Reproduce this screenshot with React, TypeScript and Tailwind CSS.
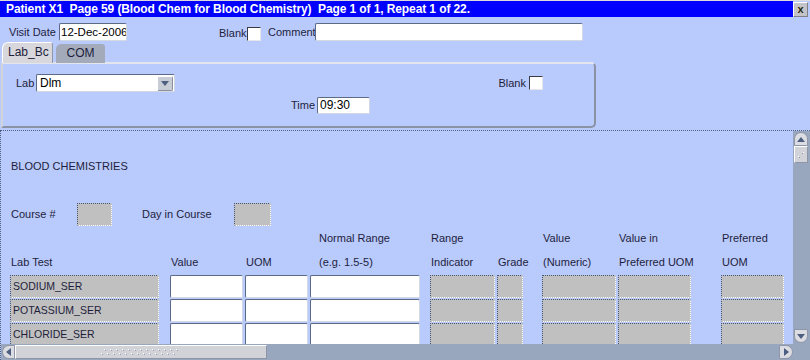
import React from 'react';

const LABEL = 'text-[11px] text-[#1e1e3c] whitespace-nowrap';
const WHITE_BOX =
  'bg-white border border-t-[#5d6a86] border-l-[#5d6a86] border-r-[#d4d8e2] border-b-[#d4d8e2] rounded-[2px]';
const GRAY_BOX =
  'bg-[#c0c0c0] border border-dotted border-t-[#45547a] border-l-[#45547a] border-r-white border-b-white';

// column placement in the lab grid (margin from previous column + width)
const COLS = [
  'ml-[9px] w-[149px]',
  'ml-[11px] w-[73px]',
  'ml-[2px] w-[63px]',
  'ml-[2px] w-[110px]',
  'ml-[10px] w-[65px]',
  'ml-[2px] w-[26px]',
  'ml-[19px] w-[74px]',
  'ml-[2px] w-[73px]',
  'ml-[30px] w-[63px]',
];

// true = editable (white), false = read-only (gray)
const EDITABLE = [false, true, true, true, false, false, false, false, false];

const HEAD_1 = ['', '', '', 'Normal Range', 'Range', '', 'Value', 'Value in', 'Preferred'];
const HEAD_2 = ['Lab Test', 'Value', 'UOM', '(e.g. 1.5-5)', 'Indicator', 'Grade', '(Numeric)', 'Preferred UOM', 'UOM'];

const TESTS = ['SODIUM_SER', 'POTASSIUM_SER', 'CHLORIDE_SER'];

function Checkbox() {
  return (
    <div className="w-[14px] h-[14px] bg-white border border-t-[#3a3a44] border-l-[#3a3a44] border-r-[#e6e6ea] border-b-[#e6e6ea]" />
  );
}

function Triangle({ dir }: { dir: 'up' | 'down' | 'left' | 'right' }) {
  const pts = {
    up: '0,5 4,0 8,5',
    down: '0,0 8,0 4,5',
    left: '5,0 5,8 0,4',
    right: '0,0 0,8 5,4',
  }[dir];
  const w = dir === 'up' || dir === 'down' ? 8 : 5;
  const h = dir === 'up' || dir === 'down' ? 5 : 8;
  return (
    <svg width={w} height={h} viewBox={`0 0 ${w} ${h}`}>
      <polygon points={pts} fill="#4e5e80" />
    </svg>
  );
}

function HeaderRow({ labels }: { labels: string[] }) {
  return (
    <div className="flex h-[24px] items-center">
      {COLS.map((c, i) => (
        <div key={i} className={`${c} ${LABEL} ${i === 3 ? 'pl-[9px]' : 'pl-[1px]'}`}>
          {labels[i]}
        </div>
      ))}
    </div>
  );
}

export default function App() {
  return (
    <div className="w-[810px] h-[360px] overflow-hidden bg-[#b9cafd] border-t border-t-[#dcdcdc] flex flex-col font-['Liberation_Sans',Arial,sans-serif]">
      {/* Title bar */}
      <div className="flex h-[16px] shrink-0">
        <div className="flex-1 bg-[#0000ff] text-white font-bold text-[12px] leading-[16px] pl-[6px] whitespace-pre tracking-[-0.1px]">
          Patient X1  Page 59 (Blood Chem for Blood Chemistry)  Page 1 of 1, Repeat 1 of 22.
        </div>
        <div className="w-[17px] flex items-start pt-[1px]">
          <div className="w-[15px] h-[15px] bg-[#c4c4c8] border border-t-white border-l-white border-r-[#808088] border-b-[#808088] flex items-center justify-center text-[11px] font-bold leading-none text-[#2a2a10]">
            x
          </div>
        </div>
      </div>

      {/* Visit date / comment */}
      <div className="flex h-[18px] mt-[6px] items-center shrink-0">
        <span className={`${LABEL} ml-[9px] w-[50px]`}>Visit Date</span>
        <div className={`${WHITE_BOX} w-[68px] h-[18px] text-[11.5px] leading-[16px] pl-[1px] text-black whitespace-nowrap overflow-hidden`}>
          12-Dec-2006
        </div>
        <span className={`${LABEL} ml-[92px] w-[28px] mt-[3px]`}>Blank</span>
        <div className="self-end">
          <Checkbox />
        </div>
        <span className={`${LABEL} ml-[7px] w-[47px]`}>Comment</span>
        <div className={`${WHITE_BOX} w-[268px] h-[18px]`} />
      </div>

      {/* Tabs */}
      <div className="flex h-[20px] mt-[2px] items-end pl-[2px] shrink-0 relative z-10">
        <div className="w-[51px] h-[21px] bg-[#d8d8dc] rounded-tl-[6px] rounded-tr-[3px] border-t border-l border-t-white border-l-white border-r border-r-[#9098a8] text-[12px] text-[#1e1e3c] leading-[19px] pl-[5px]">
          Lab_Bc
        </div>
        <div className="ml-[3px] w-[49px] h-[19px] bg-[#a3abbb] rounded-tl-[5px] rounded-tr-[3px] text-[12px] text-[#1e1e3c] leading-[19px] text-center">
          COM
        </div>
      </div>

      {/* Tab panel */}
      <div className="ml-[1px] w-[595px] h-[66px] -mt-[1px] shrink-0 border-2 border-t-[#e4e6ee] border-l-[#d2d4dc] border-r-[#8a92a4] border-b-[#8a92a4] rounded-tr-[5px] rounded-br-[5px] pt-[10px]">
        <div className="flex h-[18px] items-center pl-[13px] pr-[51px]">
          <span className={`${LABEL} w-[20px]`}>Lab</span>
          <div className={`${WHITE_BOX} w-[139px] h-[18px] flex items-center`}>
            <span className="flex-1 text-[12px] pl-[3px] text-black">Dlm</span>
            <div className="w-[16px] h-[15px] mr-[1px] bg-[#c8ccd4] border border-t-white border-l-white border-r-[#8a90a0] border-b-[#8a90a0] rounded-[2px] flex items-center justify-center">
              <Triangle dir="down" />
            </div>
          </div>
          <div className="flex-1" />
          <span className={LABEL}>Blank</span>
          <div className="ml-[3px]">
            <Checkbox />
          </div>
        </div>
        <div className="flex h-[17px] items-center mt-[5px] pl-[288px]">
          <span className={`${LABEL} w-[26px]`}>Time</span>
          <div className={`${WHITE_BOX} w-[53px] h-[17px] text-[12px] leading-[15px] pl-[2px] text-black`}>
            09:30
          </div>
        </div>
      </div>

      {/* Scrolling block */}
      <div className="mt-[2px] flex-1 flex flex-col border-t border-l border-dotted border-[#4e5e80] min-h-0">
        <div className="flex h-[213px] shrink-0">
          <div className="w-[792px] overflow-hidden">
            <div className={`${LABEL} mt-[27px] h-[16px] leading-[16px] pl-[10px] text-[10.5px]`}>BLOOD CHEMISTRIES</div>

            <div className="flex h-[23px] mt-[29px] items-center pl-[10px]">
              <span className={`${LABEL} w-[66px]`}>Course #</span>
              <div className={`${GRAY_BOX} w-[35px] h-[23px]`} />
              <span className={`${LABEL} ml-[30px] w-[92px]`}>Day in Course</span>
              <div className={`${GRAY_BOX} w-[37px] h-[23px]`} />
            </div>

            <HeaderRow labels={HEAD_1} />
            <HeaderRow labels={HEAD_2} />

            <div className="flex flex-col gap-[1px] mt-[1px]">
              {TESTS.map((t) => (
                <div key={t} className="flex h-[23px]">
                  {COLS.map((c, i) => (
                    <div
                      key={i}
                      className={`${c} h-[23px] ${EDITABLE[i] ? WHITE_BOX : GRAY_BOX} ${i === 0 ? 'text-[10.5px] leading-[21px] pl-[2px] text-[#1e1e3c]' : ''}`}
                    >
                      {i === 0 ? t : null}
                    </div>
                  ))}
                </div>
              ))}
            </div>
          </div>

          {/* Vertical scrollbar */}
          <div className="w-[17px] bg-[#98a6be] flex flex-col items-start pl-[1px]">
            <div className="mt-[1px] w-[14px] h-[14px] bg-[#dcdde2] border border-[#8e96a8] rounded-t-[7px] flex items-center justify-center">
              <Triangle dir="up" />
            </div>
            <div className="w-[14px] h-[17px] bg-[#d2d3d8] border border-t-white border-l-white border-r-[#8e96a8] border-b-[#8e96a8] flex items-center justify-center">
              <svg width="8" height="8" viewBox="0 0 8 8">
                <rect x="6" y="1" width="1" height="1" fill="#ffffff" />
                <rect x="5" y="2" width="1" height="1" fill="#8e96a8" />
                <rect x="1" y="5" width="1" height="1" fill="#ffffff" />
                <rect x="2" y="6" width="1" height="1" fill="#8e96a8" />
              </svg>
            </div>
            <div className="flex-1" />
            <div className="mb-[1px] w-[14px] h-[14px] bg-[#dcdde2] border border-[#8e96a8] rounded-b-[7px] flex items-center justify-center">
              <Triangle dir="down" />
            </div>
          </div>
        </div>

        {/* Horizontal scrollbar */}
        <div className="flex h-[16px] bg-[#98a6be] items-center shrink-0">
          <div className="ml-[1px] w-[13px] h-[14px] bg-[#dcdde2] border border-[#8e96a8] rounded-l-[7px] flex items-center justify-center">
            <Triangle dir="left" />
          </div>
          <div className="w-[252px] h-[14px] bg-[#d2d3d8] border border-t-white border-l-white border-r-[#8e96a8] border-b-[#8e96a8] flex items-center justify-center">
            <svg width="80" height="6" viewBox="0 0 80 6">
              {Array.from({ length: 13 }).map((_, i) => (
                <g key={i}>
                  <rect x={i * 6 + 3} y="0" width="1" height="1" fill="#ffffff" />
                  <rect x={i * 6 + 4} y="1" width="1" height="1" fill="#9aa0b0" />
                  <rect x={i * 6} y="4" width="1" height="1" fill="#ffffff" />
                  <rect x={i * 6 + 1} y="5" width="1" height="1" fill="#9aa0b0" />
                </g>
              ))}
            </svg>
          </div>
          <div className="flex-1" />
          <div className="w-[14px] h-[14px] bg-[#dcdde2] border border-[#8e96a8] rounded-r-[7px] flex items-center justify-center mr-[17px]">
            <Triangle dir="right" />
          </div>
        </div>
      </div>
    </div>
  );
}
